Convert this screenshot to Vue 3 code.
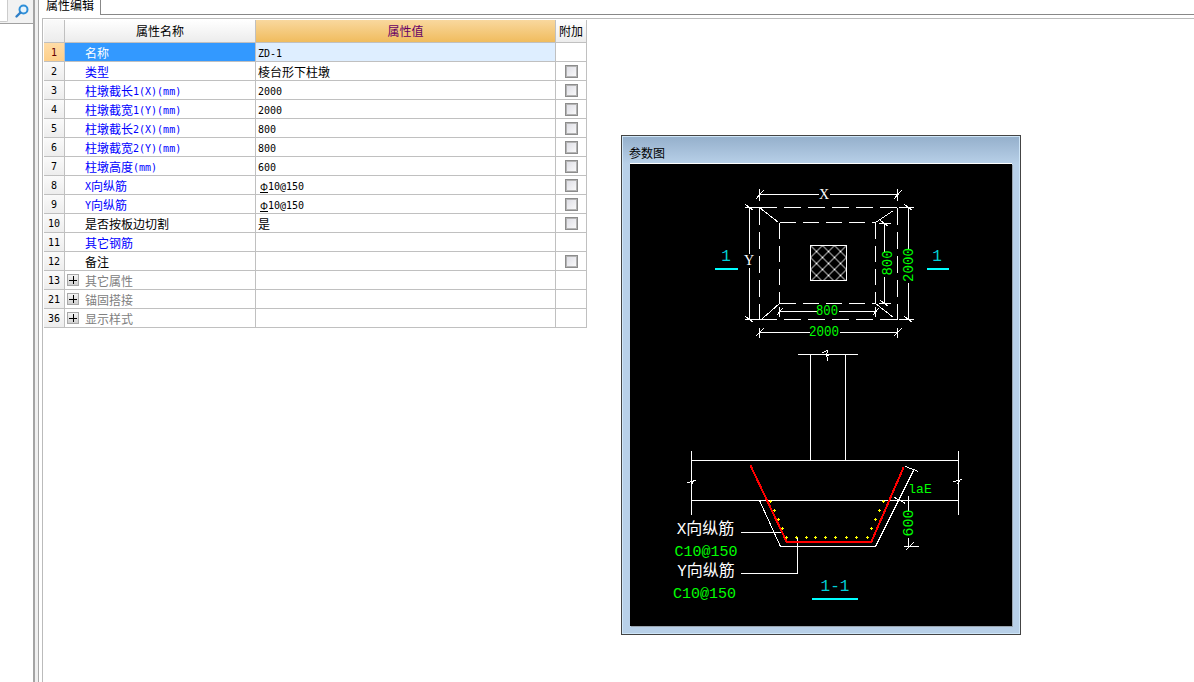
<template>
  <div class="app">
    <aside class="side">
      <div class="search">
        <div class="search-input"></div>
        <svg class="search-icon" width="16" height="16" viewBox="0 0 16 16">
          <circle cx="9.5" cy="6.5" r="4" fill="#e8f4fc" stroke="#2f8fd8" stroke-width="2" />
          <path d="M6.5 9.5L2.5 13.5" stroke="#2f7fc8" stroke-width="2.4" stroke-linecap="round" />
        </svg>
      </div>
    </aside>
    <div class="sash"></div>

    <main class="main">
      <div class="tabs">
        <div class="tab">属性编辑</div>
      </div>

      <div class="panel">
        <div class="grid">
          <div class="row head">
            <div class="cell num"></div>
            <div class="cell name-head">属性名称</div>
            <div class="cell value-head">属性值</div>
            <div class="cell extra-head">附加</div>
          </div>

          <div
            v-for="(row, i) in rows"
            :key="row.no"
            class="row"
            :class="{ selected: i === 0, group: row.group }"
          >
            <div class="cell num">{{ row.no }}</div>
            <div class="cell name" :class="{ blue: row.blue }">
              <span v-if="row.group" class="plus"></span>
              <span v-for="(r, j) in runs(row.name)" :key="j" :class="{ lat: r.lat }">{{ r.text }}</span>
            </div>
            <div class="cell value">
              <span v-if="row.rebar" class="rebar">Φ</span>
              <span v-for="(r, j) in runs(row.value)" :key="j" :class="{ lat: r.lat }">{{ r.text }}</span>
            </div>
            <div class="cell extra">
              <span v-if="row.check" class="check"></span>
            </div>
          </div>
        </div>

        <section class="dialog">
          <div class="dialog-title">参数图</div>
          <div class="canvas">
            <svg width="382" height="462" viewBox="630 164 382 462">
              <defs>
                <pattern id="hatch" width="12" height="12" patternUnits="userSpaceOnUse" x="810" y="245">
                  <path d="M0 0L12 12M12 0L0 12" stroke="#fff" stroke-width="1.2" shape-rendering="crispEdges" />
                </pattern>
              </defs>

              <g transform="translate(.5 .5)" fill="none" shape-rendering="crispEdges">
                <!-- 平面图 -->
                <path class="w dash" d="M759 207H897M759 319H897M759 207V319M897 207V319" />
                <path class="w dash2" d="M779 222H875M779 303H875M779 222V303M875 222V303" />
                <path class="w" d="M759 207L778 222M893 210L875 222M762 318L779 303M875 303L893 317" />
                <path class="w" d="M759 194H818M829 194H897M759 188V200M897 188V200M755 199L763 190M893 199L901 190" />
                <path class="w" d="M749 207V253M749 267V319M744 207H758M744 319H758M745 204L753 210M745 316L753 322" />
                <path class="w" d="M908 207V248M908 282V319M898 207H913M898 319H913M904 204L912 210M904 316L912 322" />
                <path class="w" d="M884 223V251M884 276V303M878 223H890M878 303H890M880 220L888 226M880 300L888 306" />
                <path class="w" d="M779 311H816M838 311H875M779 306V316M875 306V316M776 315L782 308M872 315L878 308" />
                <path class="w" d="M759 332H809M839 332H897M759 327V337M897 327V337M755 336L763 328M893 336L901 328" />
                <rect x="810" y="245" width="36" height="35" fill="url(#hatch)" class="w" />

                <!-- 剖面图 -->
                <path class="w" d="M797 354H857M810 354V460M845 354V460M822 352L827 350L826 356L829 354M827 356L827 360" />
                <path class="w" d="M691 460H958M691 500H958M691 450V514M958 450V514" />
                <path class="w" d="M687 482L696 480M691 484L693 480M953 481L962 479M957 484L960 479" />
                <path class="w" d="M759 500L780 546H875L913 470M905 466L918 471" />
                <path class="w" d="M894 497L905 503M903 500H913M908 495V510M908 537V546M903 546H918M905 550L913 542" />
                <path class="w" d="M740 532H782M740 573H797V537" />
                <path class="red" d="M750 465L786 541H871L903 467" />
                <path class="cyan" d="M714 268H737M926 268H948M811 598H857" />
              </g>
              <path class="yellow" :d="dots" />

              <text class="t white serif" x="824" y="194">X</text>
              <text class="t white serif" x="749" y="260">Y</text>
              <text class="t green dim" x="827" y="311" textLength="22" lengthAdjust="spacingAndGlyphs">800</text>
              <text class="t green dim" x="824" y="332" textLength="30" lengthAdjust="spacingAndGlyphs">2000</text>
              <text class="t green dim" transform="translate(888 263) rotate(-90)" textLength="25" lengthAdjust="spacingAndGlyphs">800</text>
              <text class="t green dim" transform="translate(909 265) rotate(-90)" textLength="34" lengthAdjust="spacingAndGlyphs">2000</text>
              <text class="t green dim" transform="translate(909 523) rotate(-90)" textLength="27" lengthAdjust="spacingAndGlyphs">600</text>
              <text class="t green" x="920" y="489">laE</text>
              <text class="t cyan-text big" x="726" y="257">1</text>
              <text class="t cyan-text big" x="937" y="257">1</text>
              <text class="t cyan-text big" x="835" y="587">1-1</text>
              <text class="t white cjk" x="705.5" y="530">X向纵筋</text>
              <text class="t white cjk" x="706" y="572">Y向纵筋</text>
              <text class="t green large" x="706" y="552">C10@150</text>
              <text class="t green large" x="704.5" y="594">C10@150</text>
            </svg>
          </div>
        </section>
      </div>
    </main>
  </div>
</template>

<script setup>
const rows = [
  { no: 1, name: '名称', value: 'ZD-1' },
  { no: 2, name: '类型', value: '棱台形下柱墩', blue: true, check: true },
  { no: 3, name: '柱墩截长1(X)(mm)', value: '2000', blue: true, check: true },
  { no: 4, name: '柱墩截宽1(Y)(mm)', value: '2000', blue: true, check: true },
  { no: 5, name: '柱墩截长2(X)(mm)', value: '800', blue: true, check: true },
  { no: 6, name: '柱墩截宽2(Y)(mm)', value: '800', blue: true, check: true },
  { no: 7, name: '柱墩高度(mm)', value: '600', blue: true, check: true },
  { no: 8, name: 'X向纵筋', value: '10@150', rebar: true, blue: true, check: true },
  { no: 9, name: 'Y向纵筋', value: '10@150', rebar: true, blue: true, check: true },
  { no: 10, name: '是否按板边切割', value: '是', check: true },
  { no: 11, name: '其它钢筋', value: '', blue: true },
  { no: 12, name: '备注', value: '', check: true },
  { no: 13, name: '其它属性', value: '', group: true },
  { no: 21, name: '锚固搭接', value: '', group: true },
  { no: 36, name: '显示样式', value: '', group: true }
]

// 中文和西文字宽不一样，拆开分别设字体
function runs(text) {
  const parts = text.match(/[\x00-\x7f]+|[^\x00-\x7f]+/g) || []
  return parts.map((p) => ({ text: p, lat: /^[\x00-\x7f]/.test(p) }))
}

// 钢筋点
const points = [
  [770, 501], [774, 510], [778, 519], [782, 528], [786, 537],
  [796, 537], [806, 537], [815, 537], [825, 537], [835, 537], [846, 537], [856, 537], [867, 537],
  [871, 528], [875, 519], [879, 510], [883, 501]
]
const dots = points.map(([x, y]) => `M${x - 1} ${y}h3v1h-3zM${x} ${y - 1}h1v3h-1z`).join('')
</script>

<style scoped>
.app {
  display: flex;
  width: 1194px;
  height: 682px;
  overflow: hidden;
  background: #fff;
  font-family: "Noto Sans CJK SC", "Liberation Sans", sans-serif;
  font-size: 12px;
  color: #000;
}

.side {
  width: 33px;
  flex: none;
  border-right: 2px solid #a4a4a4;
}

.search {
  display: flex;
  height: 23px;
  border-bottom: 1px solid #a0a0a0;
  background: #f2f2f2;
}

.search-input {
  width: 8px;
  height: 22px;
  box-sizing: border-box;
  background: #fff;
  border-right: 1px solid #ccc;
  border-bottom: 1px solid #ccc;
  border-bottom-right-radius: 2px;
}

.search-icon {
  margin: 3px 0 0 6px;
}

.sash {
  width: 3px;
  flex: none;
  background: #f0f0f0;
  border-right: 1px solid #a8a8a8;
}

.main {
  flex: 1;
  min-width: 0;
}

.tabs {
  display: flex;
  height: 14px;
  margin-bottom: 4px;
}

.tab {
  width: 62px;
  height: 15px;
  box-sizing: border-box;
  padding-left: 7px;
  line-height: 10px;
  overflow: hidden;
  border-right: 1px solid #888;
  background: #fff;
}

.tabs::after {
  content: "";
  flex: 1;
  border-bottom: 1px solid #888;
  height: 14px;
}

.panel {
  display: flex;
  align-items: flex-start;
  gap: 34px;
  height: 663px;
  margin-left: 3px;
  padding: 1px 0 0 1px;
  border-top: 1px solid #bbb;
  border-left: 1px solid #bbb;
}

.grid {
  width: 543px;
  flex: none;
}

.row {
  display: grid;
  grid-template-columns: 21px 191px 300px 31px;
  height: 19px;
}

.row.head {
  height: 23px;
}

.cell {
  box-sizing: border-box;
  min-width: 0;
  border-right: 1px solid #c0c0c0;
  border-bottom: 1px solid #c0c0c0;
  line-height: 19px;
  white-space: nowrap;
  overflow: hidden;
}

.head .cell {
  line-height: 22px;
  text-align: center;
  background: linear-gradient(#fff, #ececec);
}

.head .num {
  background: linear-gradient(#fafafa, #ececec);
}

.head .value-head {
  color: #660066;
  background: linear-gradient(#f9d89e, #f0bc5e);
}

.num {
  text-align: center;
  background: linear-gradient(#fafafa, #ededed);
  font-family: "DejaVu Sans Mono", monospace;
  font-size: 10px;
}

.name {
  position: relative;
  padding-left: 20px;
}

.name.blue {
  color: #0000ff;
}

.value {
  padding-left: 2px;
}

.extra {
  display: flex;
  align-items: center;
  justify-content: center;
}

.lat {
  font-family: "DejaVu Sans Mono", monospace;
  font-size: 10px;
  vertical-align: 1px;
}

.selected .num {
  color: #660000;
  background: linear-gradient(#ffdca6, #fdcf8a);
}

.selected .name {
  color: #fff;
  background: #3399ff;
}

.selected .value {
  background: #deeeff;
}

.group .name {
  color: #808080;
}

.plus {
  position: absolute;
  left: 2px;
  top: 3px;
  width: 12px;
  height: 12px;
  box-sizing: border-box;
  border: 1px solid #a8a8a8;
  background:
    linear-gradient(#000, #000) center / 8px 1px no-repeat,
    linear-gradient(#000, #000) center / 1px 8px no-repeat,
    linear-gradient(#f4f4f4, #d0d0d0);
}

.rebar {
  display: inline-block;
  width: 8px;
  margin: 0 0 0 2px;
  border-bottom: 1px solid #000;
  font-family: "Liberation Sans", sans-serif;
  font-size: 10px;
  line-height: 9px;
  text-align: center;
}

.check {
  width: 13px;
  height: 13px;
  box-sizing: border-box;
  border: 1px solid #8c8c8c;
  box-shadow: inset 0 0 0 1px #b4b4b4;
  background: linear-gradient(135deg, #dcdce4, #fbfbfb);
}

.dialog {
  flex: none;
  width: 400px;
  height: 500px;
  margin-top: 115px;
  box-sizing: border-box;
  border: 1px solid #444;
  box-shadow: inset 0 0 0 1px #cfe6f8;
  background: linear-gradient(#94afcb, #b8d0e8 28px);
  padding: 0 7px 0 8px;
}

.dialog-title {
  height: 28px;
  margin-left: -1px;
  line-height: 33px;
}

.canvas {
  width: 382px;
  height: 462px;
  background: #000;
  box-shadow: 0 -1px 0 #fff, 1px 1px 0 #9aa4ae;
}

.canvas svg {
  display: block;
}

.w {
  stroke: #fff;
  stroke-width: 1;
}

.dash {
  stroke-dasharray: 17 7;
}

.dash2 {
  stroke-dasharray: 16 7;
}

.red {
  stroke: #ff0000;
  stroke-width: 2;
}

.yellow {
  fill: #ffff00;
}

.cyan {
  stroke: #00ffff;
  stroke-width: 2;
}

.t {
  font-family: "Liberation Mono", monospace;
  font-size: 13px;
  text-anchor: middle;
  dominant-baseline: central;
}

.white {
  fill: #fff;
}

.green {
  fill: #00ff00;
}

.cyan-text {
  fill: #00d0d8;
}

.serif {
  font-family: "Liberation Serif", serif;
  font-size: 14px;
}

.dim {
  font-size: 14px;
}

.big {
  font-size: 16px;
}

.large {
  font-size: 15px;
}

.cjk {
  font-family: "Liberation Mono", "Noto Sans CJK SC", monospace;
  font-size: 16px;
}
</style>
